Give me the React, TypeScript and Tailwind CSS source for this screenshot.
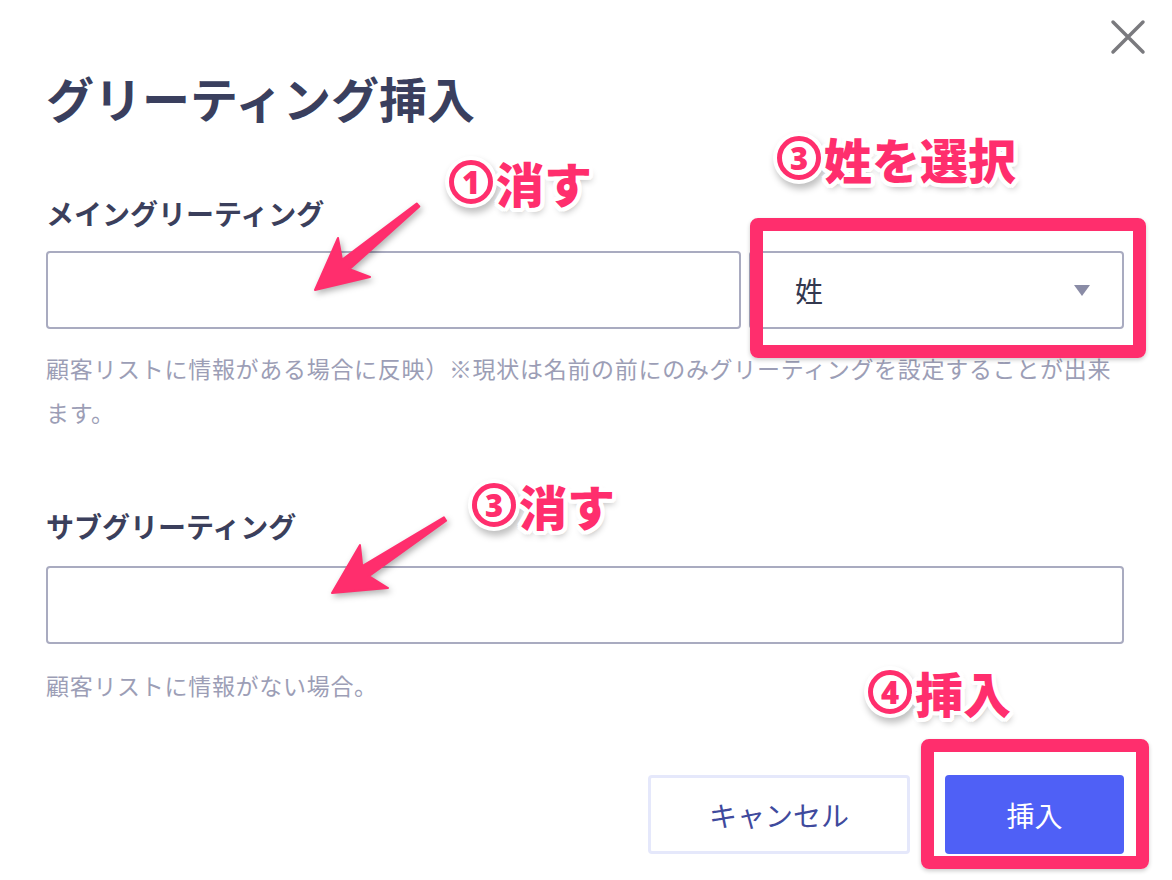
import React from 'react';

const outline =
  '[text-shadow:4px_0_0_#fff,-4px_0_0_#fff,0_4px_0_#fff,0_-4px_0_#fff,3px_3px_0_#fff,-3px_-3px_0_#fff,3px_-3px_0_#fff,-3px_3px_0_#fff,2px_4px_0_#fff,4px_2px_0_#fff,-2px_4px_0_#fff,-4px_2px_0_#fff,2px_-4px_0_#fff,4px_-2px_0_#fff,-2px_-4px_0_#fff,-4px_-2px_0_#fff,2px_5px_7px_rgba(0,0,0,0.3)]';

const field = 'h-[78px] rounded-[4px] border-2 border-[#a9abc0] bg-white';

const Note: React.FC<{ n: string; text: string; className: string }> = ({ n, text, className }) => (
  <div className={`absolute flex items-center gap-[3px] whitespace-nowrap ${className}`}>
    <span className="flex h-[44px] w-[44px] items-center justify-center rounded-full border-[5px] border-[#ff2e6d] bg-white text-[31px] leading-none font-black text-[#ff2e6d] shadow-[0_0_0_4px_#fff,2px_5px_7px_4px_rgba(0,0,0,0.25)] font-['Noto_Sans',sans-serif]">
      {n}
    </span>
    <span className={`text-[48px] leading-none font-black text-[#ff2e6d] ${outline}`}>{text}</span>
  </div>
);

const App: React.FC = () => {
  return (
    <div className="relative h-[880px] w-[1172px] overflow-hidden bg-white font-['Noto_Sans_CJK_JP','Noto_Sans',sans-serif]">
      <div className="flex justify-end pr-[26px] pt-[19px]">
        <button className="h-[36px] w-[36px]">
          <svg width="36" height="36" viewBox="0 0 36 36">
            <path d="M3 3L33 33M33 3L3 33" stroke="#7a7a7e" strokeWidth="3.5" strokeLinecap="round" />
          </svg>
        </button>
      </div>

      <div className="pl-[46px] pr-[48px] pt-[6px]">
        <h1 className="text-[48px] font-bold leading-[72px] text-[#3a3f5e]">グリーティング挿入</h1>

        <label className="mt-[60px] block text-[28px] font-bold leading-[40px] text-[#3b3f5c]">メイングリーティング</label>
        <div className="mt-[18px] flex gap-[8px]">
          <div className={`flex-1 ${field}`} />
          <div className={`relative flex w-[375px] items-center justify-between pl-[44px] pr-[32px] ${field}`}>
            <span className="text-[28px] text-[#33384f]">姓</span>
            <svg width="16" height="11" viewBox="0 0 16 11">
              <path d="M0 0h16L8 11z" fill="#8a8ca6" />
            </svg>
            <div className="absolute -top-[35px] -right-[24px] -bottom-[31px] -left-[1px] rounded-[8px] border-[13px] border-[#ff2e6d] shadow-[0_2px_4px_rgba(0,0,0,0.2)]" />
          </div>
        </div>
        <p className="mt-[17px] text-[23px] leading-[44px] tracking-[0.7px] text-[#9c9eb6]">
          顧客リストに情報がある場合に反映）※現状は名前の前にのみグリーティングを設定することが出来ます。
        </p>

        <label className="mt-[72px] block text-[28px] font-bold leading-[40px] text-[#3b3f5c]">サブグリーティング</label>
        <div className={`mt-[20px] ${field}`} />
        <p className="mt-[19px] text-[23px] leading-[44px] tracking-[0.7px] text-[#9c9eb6]">顧客リストに情報がない場合。</p>

        <div className="mt-[68px] flex justify-end gap-[35px]">
          <button className="h-[79px] w-[262px] rounded-[4px] border-[3px] border-[#e5e8fb] bg-white text-[28px] text-[#3f4a9d]">
            キャンセル
          </button>
          <div className="relative">
            <button className="h-[79px] w-[179px] rounded-[4px] bg-[#4f60f6] text-[28px] text-white">挿入</button>
            <div className="absolute -top-[36px] -right-[25px] -bottom-[15px] -left-[24px] rounded-[8px] border-[13px] border-[#ff2e6d] shadow-[0_2px_4px_rgba(0,0,0,0.2)]" />
          </div>
        </div>
      </div>

      {/* arrows */}
      <svg className="pointer-events-none absolute inset-0 drop-shadow-[2px_3px_3px_rgba(0,0,0,0.3)]" width="1172" height="880">
        <path
          d="M315 290L338 238L342 259.9L416.7 203.5L419.3 206.5L349.6 269.1L370 277Z"
          fill="#ff2e6d"
          stroke="#ff2e6d"
          strokeWidth="2"
          strokeLinejoin="round"
        />
        <path
          d="M332 593L360 545L362.2 566.1L443.9 517.3L446.1 520.7L368.8 576.1L388 588Z"
          fill="#ff2e6d"
          stroke="#ff2e6d"
          strokeWidth="2"
          strokeLinejoin="round"
        />
      </svg>

      <Note n="1" text="消す" className="left-[449px] top-[158px]" />
      <Note n="3" text="姓を選択" className="left-[777px] top-[134px]" />
      <Note n="3" text="消す" className="left-[472px] top-[481px]" />
      <Note n="4" text="挿入" className="left-[868px] top-[668px]" />
    </div>
  );
};

export default App;
